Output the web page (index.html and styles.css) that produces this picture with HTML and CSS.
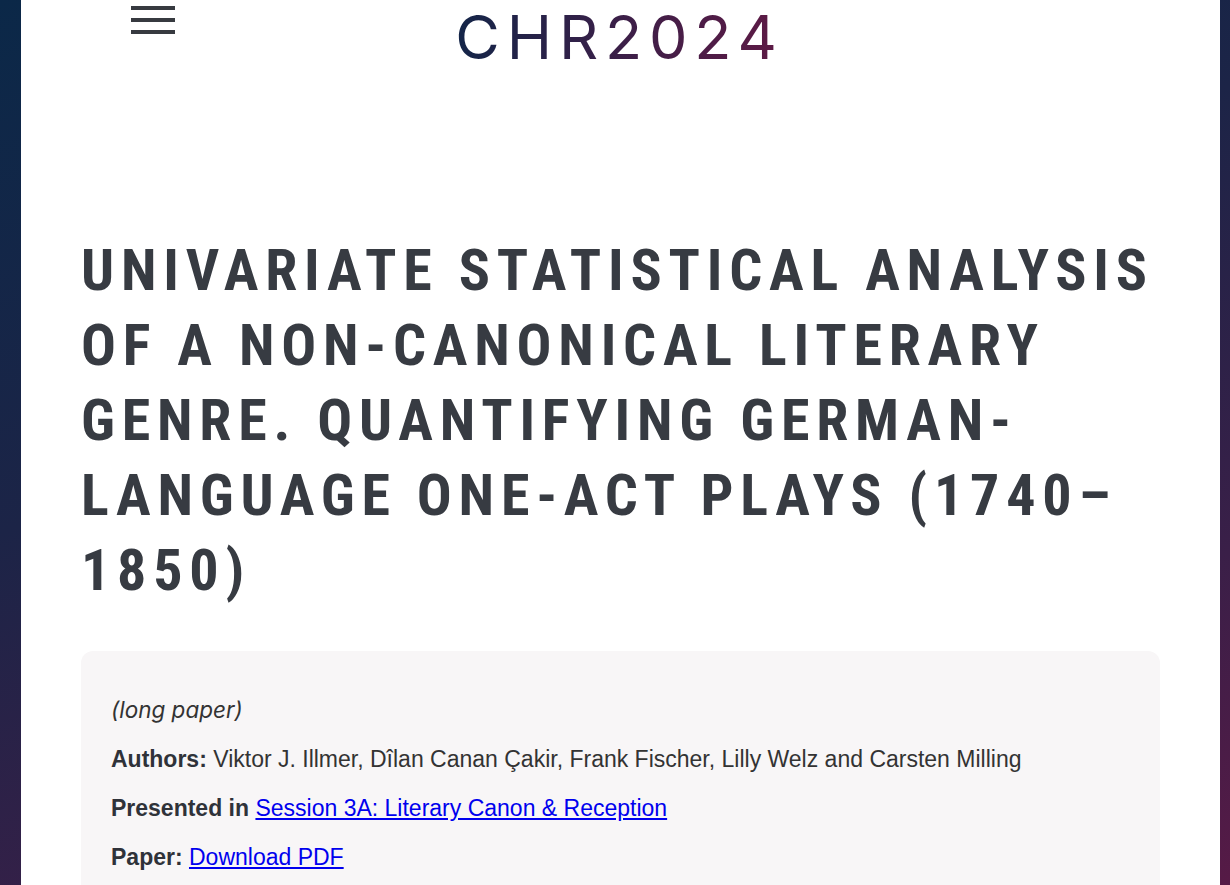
FILE: index.html
```html
<!DOCTYPE html>
<html lang="en">
<head>
<meta charset="utf-8">
<title>CHR2024</title>
<link rel="stylesheet" href="styles.css">
</head>
<body>
<div class="page">
  <header class="header">
    <button class="menu" aria-label="Menu">
      <svg width="44" height="36" viewBox="0 0 44 36"><rect x="0" y="6" width="44" height="4" fill="#373a40"/><rect x="0" y="18" width="44" height="4" fill="#373a40"/><rect x="0" y="30" width="44" height="4" fill="#373a40"/></svg>
    </button>
    <div class="logo">CHR2024</div>
  </header>
  <main class="content">
    <h1 class="title">Univariate Statistical Analysis of a Non-Canonical Literary Genre. Quantifying German-Language One-Act Plays (1740–1850)</h1>
    <section class="card">
      <p class="kind"><em>(long paper)</em></p>
      <p class="row"><strong>Authors:</strong> Viktor J. Illmer, Dîlan Canan Çakir, Frank Fischer, Lilly Welz and Carsten Milling</p>
      <p class="row"><strong>Presented in</strong> <a href="#">Session 3A: Literary Canon &amp; Reception</a></p>
      <p class="row"><strong>Paper:</strong> <a href="#">Download PDF</a></p>
    </section>
  </main>
</div>
</body>
</html>
```

FILE: styles.css
```css
html, body { margin: 0; padding: 0; }
body {
  height: 885px;
  background: linear-gradient(160deg, #0b2848 0%, #1c2447 40%, #3a1f48 75%, #561a46 100%);
  font-family: "Liberation Sans", Arial, sans-serif;
  overflow: hidden;
}
.page {
  margin: 0 10px 0 21px;
  background: #fff;
  height: 885px;
  overflow: hidden;
}
.header {
  position: relative;
  height: 80px;
  display: flex;
  justify-content: center;
}
.menu {
  position: absolute;
  left: 110px;
  top: 0;
  border: 0;
  background: none;
  padding: 0;
  cursor: pointer;
}
.menu svg { display: block; }
.logo {
  font-family: Inter, "Liberation Sans", sans-serif;
  font-size: 61px;
  font-weight: 400;
  letter-spacing: 0.112em;
  line-height: 74px;
  margin-left: -2px;
  height: 74px;
  background: linear-gradient(90deg, #132548 0%, #3b1f48 50%, #5e1a45 100%);
  -webkit-background-clip: text;
  background-clip: text;
  color: transparent;
}
.content { padding: 153px 60px 0 60px; }
.title {
  margin: 0 0 43px 0;
  font-family: Roboto, "Liberation Sans", sans-serif;
  font-stretch: 75%;
  font-weight: 700;
  font-size: 58px;
  line-height: 75px;
  letter-spacing: 0.117em;
  text-transform: uppercase;
  color: #373b42;
}
.card {
  background: #f8f6f7;
  border-radius: 12px;
  padding: 45px 30px 20px 30px;
  color: #333;
  font-size: 23px;
}
.card p { margin: 0 0 21px 0; line-height: 28px; }
.card strong { color: #2f3239; }
.kind em { font-family: Inter, "Liberation Sans", sans-serif; font-size: 22.5px; }
.card a { color: #0000ee; }
```
